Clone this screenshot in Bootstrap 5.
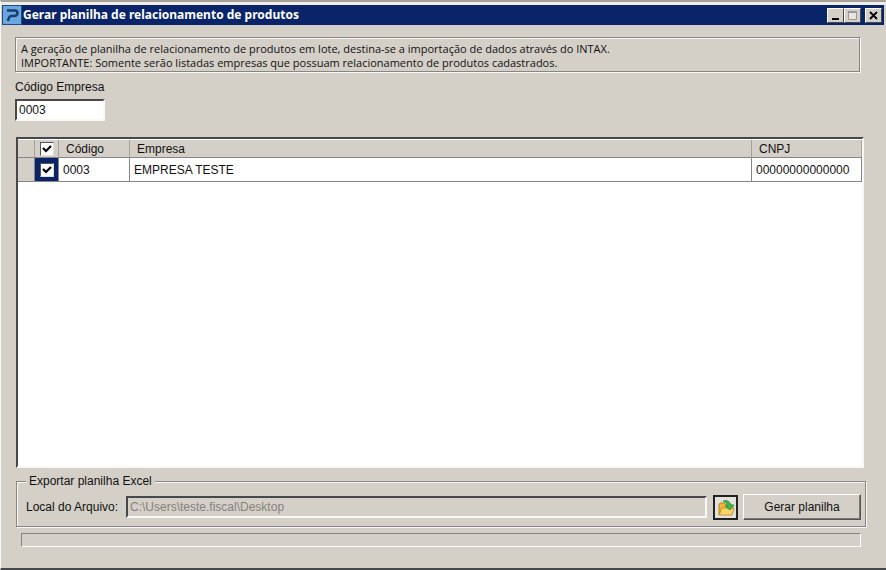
<!DOCTYPE html>
<html lang="pt-BR">
<head>
<meta charset="utf-8">
<meta name="viewport" content="width=device-width, initial-scale=1">
<title>Gerar planilha de relacionamento de produtos</title>
<link href="https://cdn.jsdelivr.net/npm/bootstrap@5.3.0/dist/css/bootstrap.min.css" rel="stylesheet">
<style>
:root { --face: #d4d0c8; --shade: #868686; --dark: #45494c; --light: #f8f8f6; --navy: #0a246a; }
body { background: var(--face); color: #111; font: 12px/14px "Liberation Sans", Arial, sans-serif; }
.win { border-top: 2px solid #a5a29c; border-bottom: 2px solid var(--dark); border-left: 1px solid var(--light); }
.win-inner { border-top: 3px solid #efede6; }
.title-bar { background: var(--navy); color: #fff; height: 20px; margin: 0 2px 0 1px; padding-right: 2px; }
.title-bar h1 { padding-left: 1px; font: bold 12px/20px "Noto Sans", "Open Sans", sans-serif; }
.app-icon { width: 20px; height: 20px; }
.cap-btn { width: 17px; height: 15px; padding: 0; background: var(--face); border: 1px solid; border-color: #fff var(--dark) var(--dark) #fff; }
.cap-btn svg { display: block; width: 15px; height: 13px; }
.content { padding: 12px 20px 21px 14px; }
.etched { border: 1px solid var(--shade); box-shadow: 1px 1px 0 var(--light), inset 1px 1px 0 var(--light); }
.info { margin: 0 6px 0 0; padding: 4px 4px 1px 5px; font-family: "Open Sans", sans-serif; font-size: 11px; line-height: 14px; }
.code-label { margin: 8px 0 5px; }
.sunken { border: 2px solid; border-color: var(--dark) var(--light) var(--light) var(--dark); border-radius: 0; outline: 0; }
.field { height: 22px; padding: 0 2px; color: #111; background: #fff; font-size: 12px; line-height: 16px; }
.code-field { width: 90px; }
.field:disabled { background: var(--face); color: #85827c; }
.grid-box { background: #fff; margin: 16px 2px 0 1px; padding-top: 1px; }
.grid-table { table-layout: fixed; width: 100%; border-collapse: separate; border-spacing: 0; }
.grid-table th { height: 18px; padding: 0 0 0 7px; background: var(--face); font-weight: 400; border-right: 1px solid #a5a29c; border-bottom: 1px solid var(--shade); vertical-align: middle; }
.grid-table td { height: 24px; padding: 0 0 0 4px; background: #fff; border-right: 1px solid var(--shade); border-bottom: 1px solid var(--shade); }
.grid-table th:first-child, .grid-table td:first-child { background: var(--face); }
.grid-table .tick { padding: 0; text-align: center; }
.grid-table td.tick { background: var(--navy); }
.c-mark { width: 17px; } .c-tick { width: 24px; } .c-code { width: 71px; } .c-cnpj { width: 110px; }
.tick input { appearance: none; display: block; width: 14px; height: 14px; margin: 0 auto; background: #fff; border: 1px solid; border-color: #555 #ddd #ddd #555; }
.tick input:checked { background: #fff url("data:image/svg+xml,%3Csvg xmlns='http://www.w3.org/2000/svg' viewBox='0 0 12 12'%3E%3Cpath d='M2 5L5 8L10 3' fill='none' stroke='%23000' stroke-width='2.2'/%3E%3C/svg%3E") center/12px no-repeat; }
.export { margin: 6px 0 0 1px; padding: 6px 4px 6px 9px; }
.export legend { float: none; width: auto; margin: 0; padding: 0 3px; font-size: 12px; line-height: 14px; background: var(--face); }
.file-label { width: 100px; }
.folder-btn { width: 25px; height: 25px; padding: 0; margin: 0 5px 0 6px; background: #e2e1dc; border: 2px solid #222; outline: 0; }
.folder-btn svg { display: block; width: 21px; height: 21px; }
.go-btn { width: 118px; height: 26px; padding: 0; color: #111; background: var(--face); border: 1px solid; border-color: #fff #555 #555 #fff; box-shadow: inset -1px -1px 0 #777; }
.bar { height: 14px; margin: 6px 5px 0 6px; border: 1px solid; border-color: var(--shade) #fff #fff var(--shade); background: var(--face); border-radius: 0; }
</style>
<script src="https://cdn.jsdelivr.net/npm/bootstrap@5.3.0/dist/js/bootstrap.bundle.min.js"></script>
</head>
<body>
<div class="win d-flex flex-column min-vh-100">
<div class="win-inner d-flex flex-column flex-grow-1">
  <header class="title-bar d-flex align-items-center">
    <svg class="app-icon" viewBox="0 0 20 20" aria-hidden="true"><path fill="#1c4c86" d="M0 0h20v20H0z"/><path fill="#6ba6df" d="M1 1h18v18H1z"/><path d="M5 5.500h8q2.500 0 2.500 2.500T12.500 11H9Q7 11 6 16" fill="none" stroke="#173f70" stroke-width="2.600"/></svg>
    <h1 class="m-0 flex-grow-1 text-truncate">Gerar planilha de relacionamento de produtos</h1>
    <button type="button" class="cap-btn" aria-label="Minimizar"><svg viewBox="0 0 15 13"><path d="M4 9h7v2H4z"/></svg></button>
    <button type="button" class="cap-btn" aria-label="Maximizar" disabled><svg viewBox="0 0 15 13"><path d="M3.500 2.500h8v8h-8z" fill="#e8e6e2" stroke="#999"/><path d="M3 2h9v2H3z" fill="#999"/></svg></button>
    <button type="button" class="cap-btn ms-1" aria-label="Fechar"><svg viewBox="0 0 15 13"><path d="M4 3l7 7M11 3l-7 7" stroke="#000" stroke-width="1.800"/></svg></button>
  </header>
  <main class="content d-flex flex-column flex-grow-1">
    <div class="info etched">A geração de planilha de relacionamento de produtos em lote, destina-se a importação de dados através do INTAX.<br>IMPORTANTE: Somente serão listadas empresas que possuam relacionamento de produtos cadastrados.</div>
    <label class="code-label" for="codigo">Código Empresa</label>
    <input id="codigo" class="sunken field code-field" type="text" value="0003">
    <div class="grid-box sunken flex-grow-1">
      <table class="grid-table">
        <colgroup><col class="c-mark"><col class="c-tick"><col class="c-code"><col><col class="c-cnpj"></colgroup>
        <thead><tr><th></th><th class="tick"><input type="checkbox" checked aria-label="Selecionar todas"></th><th scope="col">Código</th><th scope="col">Empresa</th><th scope="col">CNPJ</th></tr></thead>
        <tbody><tr><td></td><td class="tick"><input type="checkbox" checked aria-label="Selecionar 0003"></td><td>0003</td><td>EMPRESA TESTE</td><td>00000000000000</td></tr></tbody>
      </table>
    </div>
    <fieldset class="export etched">
      <legend>Exportar planilha Excel</legend>
      <div class="d-flex align-items-center">
        <label class="file-label flex-shrink-0" for="local">Local do Arquivo:</label>
        <input id="local" class="sunken field flex-grow-1" type="text" value="C:\Users\teste.fiscal\Desktop" disabled>
        <button type="button" class="folder-btn flex-shrink-0" aria-label="Escolher pasta"><svg viewBox="0 0 21 21"><path d="M4 18V8l1-2h4l2 2h6v3" fill="#efb63c" stroke="#b9811d"/><path d="M4 18L7 11h12l-2 7z" fill="#fbd56c" stroke="#c8902a"/><path d="M8 4q6-2 8 4h3l-4 5-5-4h3Q12 6 8 4z" fill="#43b649" stroke="#23862c" stroke-width=".7"/></svg></button>
        <button type="button" class="go-btn flex-shrink-0">Gerar planilha</button>
      </div>
    </fieldset>
    <div class="bar" role="progressbar" aria-label="Progresso" aria-valuenow="0" aria-valuemin="0" aria-valuemax="100"></div>
  </main>
</div>
</div>
</body>
</html>
